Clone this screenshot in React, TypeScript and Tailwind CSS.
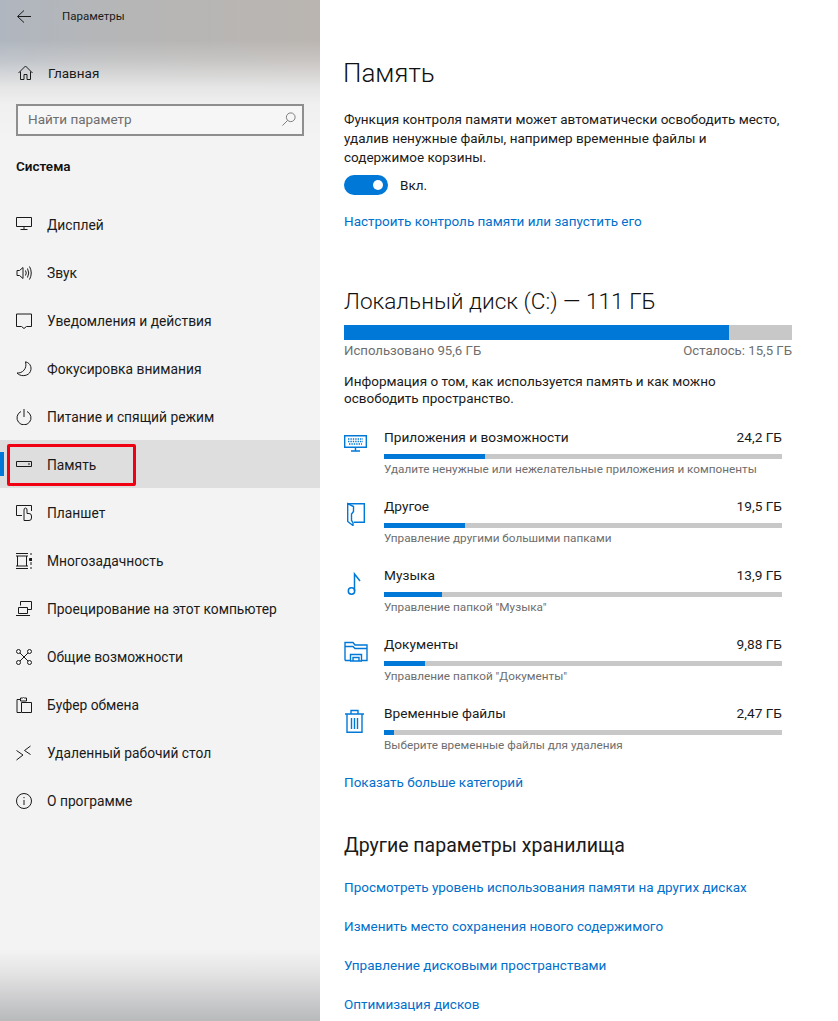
import type { ReactNode } from "react";

const font = "font-['Roboto','Noto_Sans',sans-serif]";

function Ico({ children, size = 16, view = 16, cls = "" }: { children: ReactNode; size?: number; view?: number; cls?: string }) {
    return (
        <svg width={size} height={size} viewBox={`0 0 ${view} ${view}`} fill="none" stroke="currentColor" strokeWidth="1" className={cls}>
            {children}
        </svg>
    );
}

const navItems: { label: string; icon: ReactNode; active?: boolean }[] = [
    { label: "Дисплей", icon: <><path d="M0.5 0.5H15.5V9.5H0.5Z" /><path d="M8 9.5V12M4.5 12.5H11.5" /></> },
    { label: "Звук", icon: <><path d="M1 5.5H3.5L7 2.5V13.5L3.5 10.5H1Z" /><path d="M9.5 5.5Q11 8 9.5 10.5M11.5 3.5Q14 8 11.5 12.5M13.5 1.5Q17 8 13.5 14.5" /></> },
    { label: "Уведомления и действия", icon: <path d="M0.5 1V13.5H5.5L8 15.5L10.5 13.5H15.5V1Z" /> },
    { label: "Фокусировка внимания", icon: <path d="M9.5 0.8C15 2 16.5 8 13.5 12C10.5 15.5 4 15.5 1 12C6 12.5 11.5 8 9.5 0.8Z" /> },
    { label: "Питание и спящий режим", icon: <><path d="M5 2.5A7 7 0 1 0 11 2.5" /><path d="M8 0V8" /></> },
    { label: "Память", active: true, icon: <><path d="M0.5 4.5H15.5V9.5H0.5Z" /><path d="M12 7H14" /></> },
    { label: "Планшет", icon: <><path d="M6 10.5H0.5V0.5H15.5V6" /><path d="M8 15.5V5Q8 3 9.5 3T11 5V8.5H13Q15.5 8.5 15.5 11V13Q15.5 15.5 13 15.5H8Z" /></> },
    { label: "Многозадачность", icon: <><path d="M0 0.5H12M0 15.5H12M0 13H12M0 3H12M1.5 3V13M10.5 3V13" /><path d="M15 0V2M15 14V16M15 9V12" /><path d="M13.5 5.5H16V7.5H13.5Z" fill="currentColor" /></> },
    { label: "Проецирование на этот компьютер", icon: <><path d="M4.5 4.5V0.5H15.5V8.5H11" /><path d="M2.5 6.5H11.5V12.5H2.5Z" /><path d="M0 14.5H14" /></> },
    { label: "Общие возможности", icon: <><circle cx="2.5" cy="2.5" r="2" /><circle cx="13.5" cy="2.5" r="2" /><circle cx="2.5" cy="13.5" r="2" /><circle cx="13.5" cy="13.5" r="2" /><path d="M4 4L12 12M12 4L4 12" /></> },
    { label: "Буфер обмена", icon: <><path d="M4.5 2.5H1V15.5H5" /><path d="M4.5 4V1H6.5Q7.5 -0.5 8.5 1H10.5V4Z" /><path d="M5.5 5.5H15.5V15.5H5.5Z" /></> },
    { label: "Удаленный рабочий стол", icon: <><path d="M0.5 5.5L7 10L0.5 15" /><path d="M14.5 1L8.5 5.5L14.5 9.5" /></> },
    { label: "О программе", icon: <><circle cx="8" cy="8" r="7.5" /><path d="M8 7V12" /><path d="M8 4V5.2" /></> },
];

const categories = [
    {
        title: "Приложения и возможности", size: "24,2 ГБ", fill: 101, desc: "Удалите ненужные или нежелательные приложения и компоненты",
        icon: <><path d="M0.7 2.7H22.3V14.3H0.7Z" strokeWidth="1.4" /><path d="M11.5 14.5V17.5M7 18H16" strokeWidth="1.4" /><path d="M4 6H19M4 8.5H19M5 11H18" strokeDasharray="1.4 1" strokeWidth="1.4" /></>,
    },
    {
        title: "Другое", size: "19,5 ГБ", fill: 81, desc: "Управление другими большими папками",
        icon: <><path d="M3.7 1.7H20.3V20.3H10" strokeWidth="1.4" /><path d="M3.7 1.7V19.5L9 23.5V20.5L7.5 18.5V12L9.5 9.5V4.5L3.7 1.7Z" strokeWidth="1.4" /></>,
    },
    {
        title: "Музыка", size: "13,9 ГБ", fill: 58, desc: "Управление папкой \"Музыка\"",
        icon: <><path d="M10.5 20V3L16 10" strokeWidth="1.5" /><circle cx="7.5" cy="20" r="3.2" strokeWidth="1.5" /></>,
    },
    {
        title: "Документы", size: "9,88 ГБ", fill: 41, desc: "Управление папкой \"Документы\"",
        icon: <><path d="M1 20.5V2.5H9L11 5H23V20.5H17M1 6.5H9L11 8.5H23M7 20.5H1" strokeWidth="1.4" /><path d="M6.5 21V14.5H17.5V21M9 21V17.5H15V21M6 21H18" strokeWidth="1.4" /></>,
    },
    {
        title: "Временные файлы", size: "2,47 ГБ", fill: 10, desc: "Выберите временные файлы для удаления",
        icon: <><path d="M3 5.5V23.3H18V5.5M1 5H20M7 5V1.5H14V5" strokeWidth="1.4" /><path d="M7.5 9V20M10.5 9V20M13.5 9V20" strokeWidth="1.4" /></>,
    },
];

const bottomLinks = [
    "Просмотреть уровень использования памяти на других дисках",
    "Изменить место сохранения нового содержимого",
    "Управление дисковыми пространствами",
    "Оптимизация дисков",
];

function NavRow({ label, icon, active }: { label: string; icon: ReactNode; active?: boolean }) {
    return (
        <div className={`relative flex h-12 items-center pl-4 pt-[2px] ${active ? "bg-[#dedede]" : ""}`}>
            {active && <div className="absolute left-0 top-3 h-6 w-1 bg-[#0078d7]" />}
            {active && <div className="absolute left-[7px] top-1 h-[42px] w-[129px] rounded-[2px] border-[3px] border-[#f00010]" />}
            <Ico cls="shrink-0 text-[#1a1a1a]">{icon}</Ico>
            <span className="ml-[15px] whitespace-nowrap text-[13.8px] text-[#1a1a1a]">{label}</span>
        </div>
    );
}

function CategoryRow({ title, size, fill, desc, icon }: { title: string; size: string; fill: number; desc: string; icon: ReactNode }) {
    return (
        <div className="flex h-[69px]">
            <div className="flex w-10 shrink-0 items-start pt-[6px] text-[#0078d7]">
                <Ico size={24} view={24}>{icon}</Ico>
            </div>
            <div className="w-[398px]">
                <div className="flex h-5 items-center justify-between text-[13.7px] text-[#1a1a1a]">
                    <span>{title}</span>
                    <span>{size}</span>
                </div>
                <div className="mt-[7px] h-[5px] bg-[#c8c8c8]">
                    <div className="h-full bg-[#0078d7]" style={{ width: fill }} />
                </div>
                <div className="h-5 text-[11.75px] leading-5 text-[#6e6e6e]">{desc}</div>
            </div>
        </div>
    );
}

export default function App() {
    return (
        <div className={`flex h-[1021px] w-[838px] overflow-hidden bg-white ${font}`}>
            <aside className="h-full w-80 shrink-0 bg-[linear-gradient(to_bottom,rgba(243,243,243,0)_40px,rgba(243,243,243,0.25)_60px,#e6e6e6_88px,#f0f0f0_105px,#f3f3f3_140px,#f3f3f3_950px,#e2e2e3_975px,#b8b9bb_1021px),linear-gradient(to_right,#b0b6bf,#b6b6b6_40%,#bab5b1)]">
                <div className="flex h-[34px] items-center pl-4">
                    <Ico cls="text-[#1a1a1a]"><path d="M15 7.5H2M8 1.5L1.5 7.5L8 13.5" /></Ico>
                    <span className="ml-[30px] text-[11.5px] text-[#1a1a1a]">Параметры</span>
                </div>
                <div className="mt-[15px] flex h-12 items-center pl-[18px]">
                    <Ico cls="text-[#1a1a1a]"><path d="M0.5 8L7.5 1L14.5 8M2.5 6.5V14.5H6V9.5H9V14.5H12.5V6.5" /></Ico>
                    <span className="ml-[14px] text-[13.5px] text-[#1a1a1a]">Главная</span>
                </div>
                <div className="ml-4 mt-[7px] flex h-8 w-[288px] items-center justify-between border-2 border-[#8e8e8e] bg-[#f6f6f6] pb-[2px] pl-[10px] pr-[6px]">
                    <span className="text-[13.5px] text-[#6e6e6e]">Найти параметр</span>
                    <Ico size={14} view={16} cls="text-[#6e6e6e]"><circle cx="10" cy="6" r="5" /><path d="M6.5 9.5L0.5 15.5" /></Ico>
                </div>
                <div className="mt-[20px] h-5 pl-4 text-[13.5px] font-semibold leading-5 text-[#111]">Система</div>
                <nav className="mt-[24px]">
                    {navItems.map((item) => (
                        <NavRow key={item.label} {...item} />
                    ))}
                </nav>
            </aside>
            <main className="w-[518px] pl-6">
                <div className="w-[448px]">
                    <h1 className="-ml-[1px] mt-[52px] h-[42px] text-[26px] font-light leading-[42px] text-[#111]">Память</h1>
                    <p className="mt-[16px] max-w-[440px] text-[13.5px] leading-[19px] text-[#1a1a1a]">
                        Функция контроля памяти может автоматически освободить место, удалив ненужные файлы, например временные файлы и содержимое корзины.
                    </p>
                    <div className="mt-[8px] flex h-5 items-center">
                        <div className="flex h-5 w-11 items-center justify-end rounded-full bg-[#0078d7] pr-[5px]">
                            <div className="h-[10px] w-[10px] rounded-full bg-white" />
                        </div>
                        <span className="ml-3 text-[13.5px] text-[#1a1a1a]">Вкл.</span>
                    </div>
                    <a className="mt-[16px] block h-5 text-[13.5px] leading-5 text-[#0070cc]">Настроить контроль памяти или запустить его</a>
                    <h2 className="mt-[54px] h-8 text-[22.6px] font-light leading-[34px] text-[#111]">Локальный диск (C:) — 111 ГБ</h2>
                    <div className="mt-[8px] h-[15px] bg-[#c8c8c8]">
                        <div className="h-full w-[385px] bg-[#0078d7]" />
                    </div>
                    <div className="mt-[1px] flex h-5 items-center justify-between text-[13.2px] text-[#6e6e6e]">
                        <span>Использовано 95,6 ГБ</span>
                        <span>Осталось: 15,5 ГБ</span>
                    </div>
                    <p className="mt-[12px] text-[13.5px] leading-[17px] text-[#1a1a1a]">
                        Информация о том, как используется память и как можно освободить пространство.
                    </p>
                    <div className="mt-[20px]">
                        {categories.map((c) => (
                            <CategoryRow key={c.title} {...c} />
                        ))}
                    </div>
                    <a className="block h-5 text-[13.5px] leading-5 text-[#0070cc]">Показать больше категорий</a>
                    <h3 className="mt-[41px] h-6 text-[19.5px] leading-[26px] text-[#1a1a1a]">Другие параметры хранилища</h3>
                    <div className="mt-[20px] flex flex-col gap-[19px]">
                        {bottomLinks.map((l) => (
                            <a key={l} className="block h-5 text-[13.5px] leading-5 text-[#0070cc]">{l}</a>
                        ))}
                    </div>
                </div>
            </main>
        </div>
    );
}
